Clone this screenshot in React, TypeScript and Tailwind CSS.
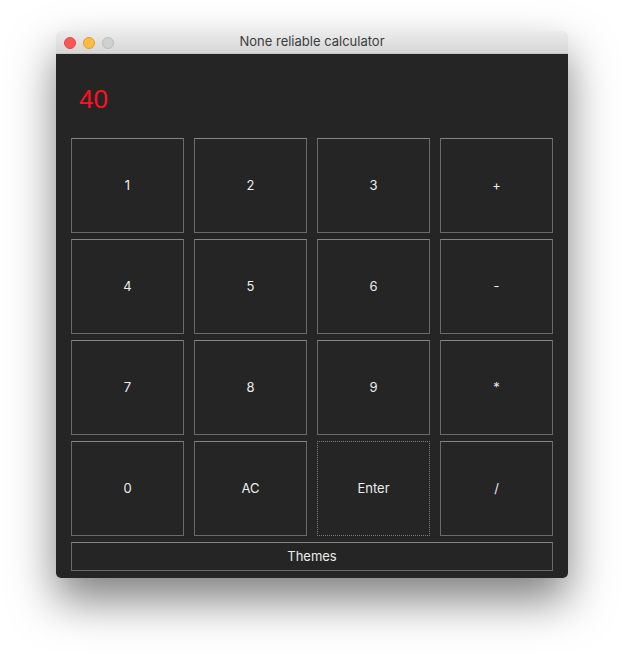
const keys = ['1', '2', '3', '+', '4', '5', '6', '-', '7', '8', '9', '*', '0', 'AC', 'Enter', '/']

function Key({ label }: { label: string }) {
  const focused = label === 'Enter'
  return (
    <button
      className={
        'h-[95px] flex items-center justify-center text-[13px] text-[#ececec] bg-[#252525] ' +
        (focused
          ? 'border border-dotted border-[#7c7c7c]'
          : 'border border-[#6a6a6a] border-t-[#858585]')
      }
    >
      {label}
    </button>
  )
}

export default function App() {
  return (
    <div className="w-[624px] h-[659px] bg-white pt-[31px] pl-[56px]" style={{ fontFamily: 'Inter, "Noto Sans", sans-serif' }}>
      <div className="w-[512px] h-[547px] rounded-[5px] overflow-hidden shadow-[0_22px_45px_rgba(0,0,0,0.5)] flex flex-col">
        {/* title bar */}
        <div className="relative h-[23px] bg-gradient-to-b from-[#ececec] to-[#d6d6d6] border-b border-[#c4c4c4] flex items-center justify-center">
          <div className="absolute left-[8px] top-[6px] flex gap-[7px]">
            <span className="w-[12px] h-[12px] rounded-full bg-[#fc5753] border border-[#df4744]" />
            <span className="w-[12px] h-[12px] rounded-full bg-[#fdbc40] border border-[#de9f34]" />
            <span className="w-[12px] h-[12px] rounded-full bg-[#d0d0d0] border border-[#bcbcbc]" />
          </div>
          <span className="text-[13px] text-[#3c3c3c]">None reliable calculator</span>
        </div>

        {/* body */}
        <div className="flex-1 bg-[#252525] flex flex-col">
          <div className="h-[84px] pt-[32px] pl-[23px]">
            <span className="text-[26px] leading-none text-[#ff1020]" style={{ fontFamily: '"Liberation Sans", Arial, sans-serif' }}>40</span>
          </div>
          <div className="px-[15px] grid grid-cols-4 gap-x-[10px] gap-y-[6px]">
            {keys.map((k) => (
              <Key key={k} label={k} />
            ))}
          </div>
          <div className="px-[15px] mt-[6px]">
            <button className="w-full h-[29px] flex items-center justify-center text-[13px] text-[#ececec] border border-[#6a6a6a] border-t-[#858585]">
              Themes
            </button>
          </div>
        </div>
      </div>
    </div>
  )
}
